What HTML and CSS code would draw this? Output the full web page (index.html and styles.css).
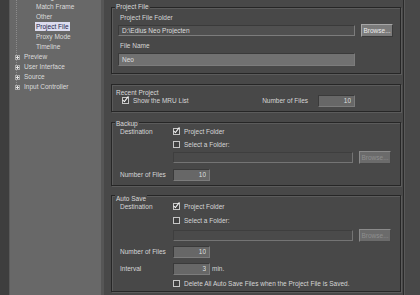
FILE: index.html
```html
<!doctype html>
<html>
  <head>
    <title>Project File settings</title>
    <meta name="viewport" content="width=device-width">
    <link rel="stylesheet" href="styles.css">
  </head>
  <body>
    <div class="app">
      <aside class="side">
        <ul class="tree">
          <li class="child">Background Render</li>
          <li class="child">Match Frame</li>
          <li class="child">Other</li>
          <li class="child"><span class="sel">Project File</span></li>
          <li class="child">Proxy Mode</li>
          <li class="child">Timeline</li>
          <li class="node"><span class="exp"></span>Preview</li>
          <li class="node"><span class="exp"></span>User Interface</li>
          <li class="node"><span class="exp"></span>Source</li>
          <li class="node"><span class="exp"></span>Input Controller</li>
        </ul>
      </aside>

      <main class="main">
        <!-- project file -->
        <section class="group g-project">
          <div class="title">Project File</div>
          <div class="row mt3"><span class="lbl">Project File Folder</span></div>
          <div class="row">
            <input class="field path" type="text" value="D:\Edius Neo Projecten">
            <button class="btn">Browse...</button>
          </div>
          <div class="row mt2"><span class="lbl">File Name</span></div>
          <div class="row mt1">
            <input class="field neo" type="text" value="Neo">
          </div>
        </section>

        <!-- recent project -->
        <section class="group g-recent">
          <div class="title">Recent Project</div>
          <div class="row">
            <label class="check grow"><span class="cb on"></span>Show the MRU List</label>
            <span class="lbl nof">Number of Files</span>
            <input class="field num" type="text" value="10">
          </div>
        </section>

        <!-- backup -->
        <section class="group g-backup">
          <div class="title">Backup</div>
          <div class="row">
            <span class="lbl col">Destination</span>
            <label class="check"><span class="cb on"></span>Project Folder</label>
          </div>
          <div class="row">
            <span class="lbl col"></span>
            <label class="check"><span class="cb"></span>Select a Folder:</label>
          </div>
          <div class="row">
            <span class="lbl col"></span>
            <input class="field path off" type="text" value="" disabled>
            <button class="btn off" disabled>Browse...</button>
          </div>
          <div class="row mt4">
            <span class="lbl col">Number of Files</span>
            <input class="field num" type="text" value="10">
          </div>
        </section>

        <!-- auto save -->
        <section class="group g-auto">
          <div class="title">Auto Save</div>
          <div class="row">
            <span class="lbl col">Destination</span>
            <label class="check"><span class="cb on"></span>Project Folder</label>
          </div>
          <div class="row mt1">
            <span class="lbl col"></span>
            <label class="check"><span class="cb"></span>Select a Folder:</label>
          </div>
          <div class="row mt2">
            <span class="lbl col"></span>
            <input class="field path off" type="text" value="" disabled>
            <button class="btn off" disabled>Browse...</button>
          </div>
          <div class="row mt3">
            <span class="lbl col">Number of Files</span>
            <input class="field num" type="text" value="10">
          </div>
          <div class="row mt4">
            <span class="lbl col">Interval</span>
            <input class="field num" type="text" value="3">
            <span class="unit">min.</span>
          </div>
          <div class="row mt2">
            <span class="lbl col"></span>
            <label class="check"><span class="cb"></span>Delete All Auto Save Files when the Project File is Saved.</label>
          </div>
        </section>
      </main>
    </div>
  </body>
</html>
```

FILE: styles.css
```css
html, body {
  margin: 0;
  padding: 0;
  height: 100%;
}
body {
  background: #484848;
  color: #d6d6d6;
  font-family: "Liberation Sans", Arial, sans-serif;
  font-size: 6.5px;
  overflow: hidden;
}
.app {
  display: flex;
  height: 295px;
}

/* tree on the left */
.side {
  width: 92px;
  background: #686868;
  border-left: 9px solid #3e3e3e;
  border-right: 3px solid #565656;
  box-shadow: inset 1px 0 0 #5a5a5a;
}
.tree {
  list-style: none;
  margin: -8px 0 0 0;
  padding: 0;
  background-image: repeating-linear-gradient(to bottom, #8c8c8c 0 1px, transparent 1px 2px);
  background-repeat: no-repeat;
  background-position: 7px 0;
  background-size: 1px 95px;
}
.tree li {
  height: 10px;
  line-height: 10px;
  white-space: nowrap;
  color: #dcdcdc;
}
.tree .child {
  padding-left: 27px;
}
.tree .node {
  display: flex;
  align-items: center;
}
.sel {
  background: #dcdcee;
  color: #23234a;
  padding: 1px 1px;
  margin-left: -1px;
}
.exp {
  width: 3px;
  height: 3px;
  margin: 0 4px 0 6px;
  border: 1px solid #a8a8a8;
  background:
    linear-gradient(#e6e6e6, #e6e6e6) center / 3px 1px no-repeat,
    linear-gradient(#e6e6e6, #e6e6e6) center / 1px 3px no-repeat,
    #686868;
}

/* right hand page */
.main {
  width: 290px;
  padding: 0 2px 0 7px;
  border-right: 1px solid #2a2a2a;
  box-shadow: 1px 0 0 #595959;
}
.group {
  border: 1px solid #262626;
  box-shadow: inset 1px 1px 0 #5b5b5b, 1px 1px 0 #5b5b5b;
  padding-left: 6px;
}
.title {
  display: table;
  height: 8px;
  line-height: 8px;
  margin: -5px 0 -3px -3px;
  padding: 0 1px;
  background: #484848;
  color: #dadada;
}
.g-project {
  margin-top: 7px;
  padding-bottom: 7px;
}
.g-recent {
  margin-top: 10px;
  padding-top: 9px;
  padding-bottom: 4px;
}
.g-backup {
  margin-top: 10px;
  padding-top: 2px;
  padding-bottom: 4px;
}
.g-auto {
  margin-top: 9px;
  padding-top: 4px;
  padding-bottom: 1px;
}

.row {
  display: flex;
  align-items: center;
  height: 13px;
}
.mt1 { margin-top: 1px; }
.mt2 { margin-top: 2px; }
.mt3 { margin-top: 3px; }
.mt4 { margin-top: 4px; }

.lbl {
  padding-left: 2px;
  white-space: nowrap;
}
.col {
  width: 55px;
  flex: none;
  box-sizing: border-box;
}
.grow {
  flex: 1;
}
.nof {
  margin-right: 10px;
}
.g-recent .row {
  width: 237px;
}
.g-recent .check {
  margin-left: 4px;
}
.unit {
  margin-left: 2px;
}

/* inputs */
.field {
  box-sizing: border-box;
  font: inherit;
  color: #dedede;
  padding: 0 3px;
  margin: 0;
  outline: none;
  border: 1px solid;
  border-color: #3a3a3a #7c7c7c #7c7c7c #3a3a3a;
}
.path {
  width: 237px;
  height: 11px;
  background: #505050;
}
.path.off {
  width: 180px;
  background: #4a4a4a;
  border-color: #3e3e3e #747474 #747474 #3e3e3e;
}
.neo {
  width: 237px;
  height: 13px;
  background: #717171;
}
.num {
  width: 37px;
  height: 12px;
  background: #676767;
  text-align: right;
}
.btn {
  box-sizing: border-box;
  width: 32px;
  height: 13px;
  margin-left: 6px;
  padding: 0;
  font: inherit;
  color: #ececec;
  background: #7b7b7b;
  border: 1px solid;
  border-color: #a6a6a6 #3a3a3a #3a3a3a #a6a6a6;
}
.btn.off {
  color: #8e8e8e;
  background: #6b6b6b;
  border-color: #8a8a8a #474747 #474747 #8a8a8a;
}

/* checkboxes */
.check {
  display: flex;
  align-items: center;
  white-space: nowrap;
}
.cb {
  width: 5px;
  height: 5px;
  flex: none;
  margin-right: 4px;
  border: 1px solid #c6c6c6;
  background: #404040;
  position: relative;
}
.cb.on::after {
  content: "";
  position: absolute;
  left: 1px;
  top: -3px;
  width: 2px;
  height: 6px;
  border: solid #f4f4f4;
  border-width: 0 1.5px 1.5px 0;
  transform: rotate(38deg);
}
```
